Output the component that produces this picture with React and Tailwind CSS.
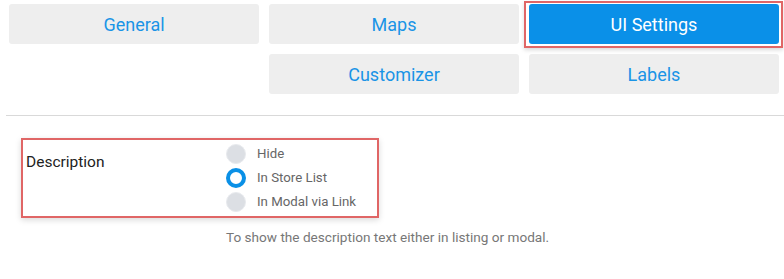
const tabs = [
  { label: 'General', col: 'col-start-1' },
  { label: 'Maps', col: 'col-start-2' },
  { label: 'UI Settings', col: 'col-start-3', active: true },
  { label: 'Customizer', col: 'col-start-2' },
  { label: 'Labels', col: 'col-start-3' },
]

const options = ['Hide', 'In Store List', 'In Modal via Link']

const Radio = ({ checked }) =>
  checked ? (
    <span className="block w-5 h-5 rounded-full border-[4px] border-[#0a90e6] bg-white" />
  ) : (
    <span className="block w-5 h-5 rounded-full border border-[#e8eaee] bg-[#dcdfe4]" />
  )

export default function App() {
  return (
    <div className="w-[784px] h-[279px] bg-white font-['Roboto',sans-serif] overflow-hidden">
      <div className="grid grid-cols-3 gap-[10px] pl-[9px] pr-[5px] pt-[4px]">
        {tabs.map((t) => (
          <div key={t.label} className={`${t.col} relative`}>
            {t.active && (
              <div className="absolute -left-[5px] -right-[4px] -top-[3px] -bottom-[4px] border-2 border-[#e06666] shadow-[0_2px_4px_rgba(0,0,0,0.15)]" />
            )}
            <button
              className={`relative w-full h-[40px] rounded-[3px] text-[18px] ${
                t.active ? 'bg-[#0a90e8] text-white' : 'bg-[#eeeeee] text-[#1a94e6]'
              }`}
            >
              {t.label}
            </button>
          </div>
        ))}
      </div>

      <div className="ml-[6px] mt-[21px] border-t border-[#d9d9d9]" />

      <div className="ml-[21px] mt-[22px] w-[358px] h-[80px] border-2 border-[#e06666] shadow-[0_2px_6px_rgba(0,0,0,0.15)] flex">
        <div className="w-[203px] pl-[3px] pt-[11px] text-[15.5px] text-[#222]">Description</div>
        <div className="flex flex-col pt-[4px]">
          {options.map((o, i) => (
            <label key={o} className="flex items-start h-[25px]">
              <span className="flex items-center">
                <Radio checked={i === 1} />
                <span className="ml-[11px] text-[13.25px] text-[#666]">{o}</span>
              </span>
            </label>
          ))}
        </div>
      </div>

      <p className="ml-[226px] mt-[9px] text-[13.6px] text-[#777]">
        To show the description text either in listing or modal.
      </p>
    </div>
  )
}
